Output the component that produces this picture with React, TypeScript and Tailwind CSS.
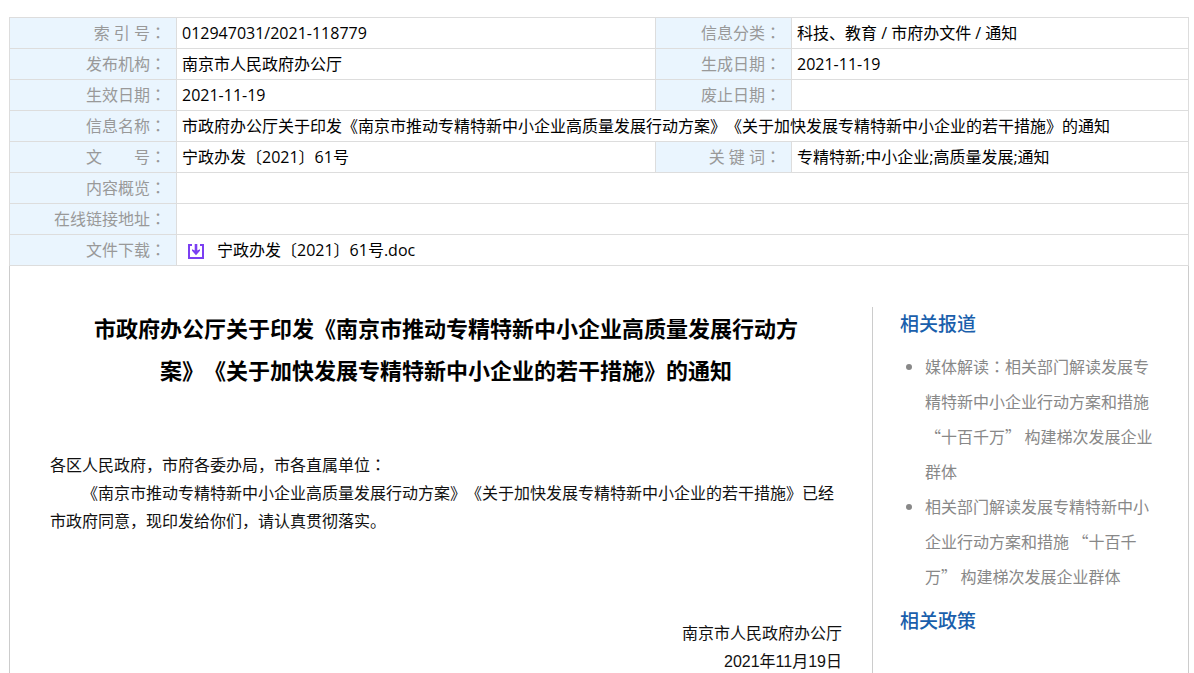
import type { ReactNode } from "react";

const related = [
  "媒体解读：相关部门解读发展专精特新中小企业行动方案和措施 “十百千万” 构建梯次发展企业群体",
  "相关部门解读发展专精特新中小企业行动方案和措施 “十百千万” 构建梯次发展企业群体",
];

// The zh-TW glyph of the colon sits in the middle of its cell
function Centred({ children }: { children: string }) {
  return (
    <>
      {children.split(/(：)/).map((part, i) =>
        i % 2 ? (
          <span key={i} lang="zh-TW">
            {part}
          </span>
        ) : (
          part
        ),
      )}
    </>
  );
}

function Label({ children }: { children: string }) {
  return (
    <th
      scope="row"
      className="h-[31px] border border-[#dddddd] bg-[#eaf5fe] pr-[10px] text-right font-normal whitespace-pre text-[#999999]"
    >
      <Centred>{children}</Centred>
    </th>
  );
}

function Value({ wide, children }: { wide?: boolean; children?: ReactNode }) {
  return (
    <td
      colSpan={wide ? 3 : 1}
      className="h-[31px] border border-[#dddddd] pl-[5px]"
    >
      {children}
    </td>
  );
}

function DownloadIcon() {
  return (
    <svg
      viewBox="0 0 16 15"
      className="mt-[2px] h-[15px] w-4"
      fill="none"
      stroke="#7b3ff2"
      strokeWidth="2"
      aria-hidden="true"
    >
      <path d="M4 1H1v13h14V1h-3" />
      <path d="M8 0v7" strokeWidth="2.6" />
      <path d="M4 5.2L8 7l4-1.8v1.6L8 11.2 4 6.8z" fill="#7b3ff2" stroke="none" />
    </svg>
  );
}

function InfoTable() {
  return (
    <table className="w-full table-fixed border-collapse leading-6">
      <colgroup>
        <col className="w-[167px]" />
        <col />
        <col className="w-[136px]" />
        <col className="w-[397px]" />
      </colgroup>
      <tbody>
        <tr>
          <Label>索 引 号：</Label>
          <Value>012947031/2021-118779</Value>
          <Label>信息分类：</Label>
          <Value>科技、教育 / 市府办文件 / 通知</Value>
        </tr>
        <tr>
          <Label>发布机构：</Label>
          <Value>南京市人民政府办公厅</Value>
          <Label>生成日期：</Label>
          <Value>2021-11-19</Value>
        </tr>
        <tr>
          <Label>生效日期：</Label>
          <Value>2021-11-19</Value>
          <Label>废止日期：</Label>
          <Value />
        </tr>
        <tr>
          <Label>信息名称：</Label>
          <Value wide>
            市政府办公厅关于印发《南京市推动专精特新中小企业高质量发展行动方案》《关于加快发展专精特新中小企业的若干措施》的通知
          </Value>
        </tr>
        <tr>
          <Label>文　　号：</Label>
          <Value>宁政办发〔2021〕61号</Value>
          <Label>关 键 词：</Label>
          <Value>专精特新;中小企业;高质量发展;通知</Value>
        </tr>
        <tr>
          <Label>内容概览：</Label>
          <Value wide />
        </tr>
        <tr>
          <Label>在线链接地址：</Label>
          <Value wide />
        </tr>
        <tr>
          <Label>文件下载：</Label>
          <Value wide>
            <a href="#" className="ml-[6px] inline-flex items-center gap-[13px] align-top">
              <DownloadIcon />
              宁政办发〔2021〕61号.doc
            </a>
          </Value>
        </tr>
      </tbody>
    </table>
  );
}

export default function App() {
  return (
    <div
      lang="zh-CN"
      className="bg-white pt-[17px] pr-[5px] pl-[9px] font-['Open_Sans','Noto_Sans_CJK_SC',sans-serif] text-base text-black [text-spacing-trim:space-all]"
    >
      <InfoTable />

      <div className="flex border-x border-[#cccccc] pt-[41px]">
        <main className="min-w-0 flex-1 pr-[30px] pl-10">
          <h1 className="px-10 text-center text-[22px] leading-[42px] font-bold">
            市政府办公厅关于印发《南京市推动专精特新中小企业高质量发展行动方案》《关于加快发展专精特新中小企业的若干措施》的通知
          </h1>
          <div className="mt-[61px] font-['Liberation_Sans','Noto_Sans_CJK_SC',sans-serif] leading-7 text-[#111111]">
            <p>
              <Centred>各区人民政府，市府各委办局，市各直属单位：</Centred>
            </p>
            <p className="indent-8">
              《南京市推动专精特新中小企业高质量发展行动方案》《关于加快发展专精特新中小企业的若干措施》已经市政府同意，现印发给你们，请认真贯彻落实。
            </p>
            <div className="mt-[84px] text-right">
              <p>南京市人民政府办公厅</p>
              <p>2021年11月19日</p>
            </div>
          </div>
        </main>

        <aside className="w-[316px] shrink-0 border-l border-[#cccccc] px-[27px] font-['Noto_Sans_CJK_SC',sans-serif]">
          <h2 className="text-[19px] leading-8 font-medium text-[#1a5fac]">相关报道</h2>
          <ul className="mt-[10px] list-disc pl-[25px] leading-[35px] text-[#888888]">
            {related.map((title) => (
              <li key={title}>
                <a href="#">
                  <Centred>{title}</Centred>
                </a>
              </li>
            ))}
          </ul>
          <h2 className="mt-[10px] text-[19px] leading-8 font-medium text-[#1a5fac]">相关政策</h2>
        </aside>
      </div>
    </div>
  );
}
